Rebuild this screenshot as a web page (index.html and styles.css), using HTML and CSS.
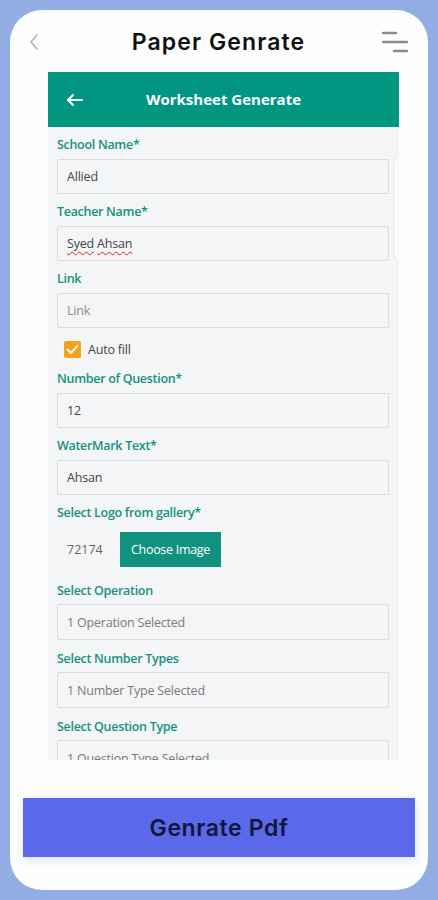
FILE: index.html
```html
<!DOCTYPE html>
<html lang="en">
<head>
<meta charset="utf-8">
<title>Paper Genrate</title>
<link rel="stylesheet" href="styles.css">
</head>
<body>
<div class="card">
  <header class="topbar">
    <svg class="chev" width="10" height="16" viewBox="0 0 10 16"><path d="M8 1 L2 8 L8 15" fill="none" stroke="#b4b4b4" stroke-width="1.6" stroke-linecap="round" stroke-linejoin="round"/></svg>
    <h1 class="title">Paper Genrate</h1>
    <svg class="menu" width="26" height="22" viewBox="0 0 26 22"><g stroke="#8c8c8c" stroke-width="2.4" stroke-linecap="round"><line x1="1" y1="2" x2="14" y2="2"/><line x1="1" y1="11" x2="25" y2="11"/><line x1="12" y1="20" x2="25" y2="20"/></g></svg>
  </header>

  <section class="panel">
    <div class="panel-head">
      <svg class="back" width="18" height="14" viewBox="0 0 18 14"><g fill="none" stroke="#fff" stroke-width="2" stroke-linecap="round" stroke-linejoin="round"><path d="M2 7 H16"/><path d="M7 2 L2 7 L7 12"/></g></svg>
      <span class="panel-title">Worksheet Generate</span>
    </div>
    <div class="form">
      <div class="ghost"></div>
      <div class="field">
        <div class="label">School Name*</div>
        <div class="input"><span>Allied</span></div>
      </div>
      <div class="field">
        <div class="label">Teacher Name*</div>
        <div class="input"><span><span class="spell">Syed</span> <span class="spell">Ahsan</span></span></div>
      </div>
      <div class="field">
        <div class="label">Link</div>
        <div class="input placeholder"><span>Link</span></div>
      </div>
      <div class="check-row">
        <span class="checkbox"><svg width="13" height="11" viewBox="0 0 13 11"><path d="M1.5 5.5 L5 9 L11.5 1.8" fill="none" stroke="#fff" stroke-width="2" stroke-linecap="round" stroke-linejoin="round"/></svg></span>
        <span class="check-label">Auto fill</span>
      </div>
      <div class="field">
        <div class="label">Number of Question*</div>
        <div class="input"><span>12</span></div>
      </div>
      <div class="field">
        <div class="label">WaterMark Text*</div>
        <div class="input"><span>Ahsan</span></div>
      </div>
      <div class="field logo">
        <div class="label">Select Logo from gallery*</div>
        <div class="logo-row">
          <span class="logo-id">72174</span>
          <span class="choose">Choose Image</span>
        </div>
      </div>
      <div class="field sel">
        <div class="label">Select Operation</div>
        <div class="input muted"><span>1 Operation Selected</span></div>
      </div>
      <div class="field sel">
        <div class="label">Select Number Types</div>
        <div class="input muted"><span>1 Number Type Selected</span></div>
      </div>
      <div class="field sel">
        <div class="label">Select Question Type</div>
        <div class="input muted"><span>1 Question Type Selected</span></div>
      </div>
    </div>
  </section>

  <button class="generate">Genrate Pdf</button>
</div>
</body>
</html>
```

FILE: styles.css
```css
* { box-sizing: border-box; }
html, body { margin: 0; padding: 0; }
body {
  background: #92ade3;
  padding: 10px;
  width: 438px;
  height: 900px;
  overflow: hidden;
  font-family: "Open Sans", "Noto Sans", sans-serif;
}
.card {
  width: 418px;
  height: 880px;
  background: #fdfefe;
  border-radius: 32px;
  display: flex;
  flex-direction: column;
}
.topbar {
  height: 62px;
  padding: 2px 20px 0 19px;
  display: grid;
  grid-template-columns: 1fr auto 1fr;
  align-items: center;
}
.chev { display: block; }
.title {
  margin: 0;
  font-family: "Inter", "Noto Sans", sans-serif;
  font-weight: 600;
  font-size: 23px;
  color: #111;
  letter-spacing: 1.1px;
}
.menu { display: block; justify-self: end; }
.panel {
  margin: 0 29px 0 38px;
  height: 688px;
  display: flex;
  flex-direction: column;
  overflow: hidden;
}
.panel-head {
  height: 55px;
  background: #009682;
  display: flex;
  align-items: center;
  position: relative;
  justify-content: center;
}
.back {
  position: absolute;
  left: 18px;
  top: 21px;
}
.panel-title {
  color: #fff;
  font-weight: 700;
  font-size: 15px;
  letter-spacing: 0;
  margin-top: -2px;
}
.form {
  flex: 1;
  background: #f4f5f7;
  padding: 10px 10px 0 9px;
  position: relative;
  overflow: hidden;
}
.ghost {
  position: absolute;
  left: 345px;
  top: 25px;
  width: 24px;
  height: 113px;
  border: 1px solid #e6e7e9;
  border-radius: 12px;
  background: #f9f9fa;
}
.field { margin-bottom: 10px; }
.label {
  font-size: 12.5px;
  line-height: 16px;
  font-weight: 600;
  color: #17917f;
  margin-bottom: 6px;
  letter-spacing: -0.3px;
}
.input {
  height: 35px;
  border: 1.5px solid #dadbdd;
  border-radius: 2px;
  background: #f4f5f7;
  padding-left: 9px;
  display: flex;
  align-items: center;
  font-size: 12.5px;
  color: #444;
  letter-spacing: -0.2px;
}
.input.placeholder { color: #8b8b8b; }
.input.muted { color: #7a7a7a; }
.spell {
  text-decoration: underline wavy #d32020;
  text-decoration-thickness: 1px;
  text-underline-offset: 3px;
}
.check-row {
  display: flex;
  align-items: center;
  margin: 13px 0 13px 7px;
  height: 17px;
}
.checkbox {
  width: 17px;
  height: 17px;
  border-radius: 2px;
  background: #f7a01c;
  display: flex;
  align-items: center;
  justify-content: center;
}
.check-label {
  margin-left: 7px;
  font-size: 12.5px;
  color: #444;
  letter-spacing: -0.2px;
}
.logo .label { margin-bottom: 11px; }
.logo { margin-bottom: 16px; }
.logo-row {
  display: flex;
  align-items: center;
  padding-left: 10px;
}
.logo-id {
  font-size: 12.5px;
  color: #666;
  width: 53px;
}
.choose {
  width: 101px;
  height: 35px;
  background: #11917f;
  color: #fff;
  font-size: 12.5px;
  letter-spacing: -0.3px;
  display: flex;
  align-items: center;
  justify-content: center;
}
.sel { margin-bottom: 11px; }
.sel .label { margin-bottom: 5px; }
.sel .input { height: 36px; }
.generate {
  margin: 38px 13px 0 13px;
  height: 59px;
  border: none;
  background: #5a68ea;
  box-shadow: 0 3px 10px rgba(90, 104, 234, 0.18);
  font-family: "Inter", "Noto Sans", sans-serif;
  font-weight: 600;
  font-size: 23px;
  letter-spacing: 0.6px;
  color: #14163a;
  padding: 0;
}
```
